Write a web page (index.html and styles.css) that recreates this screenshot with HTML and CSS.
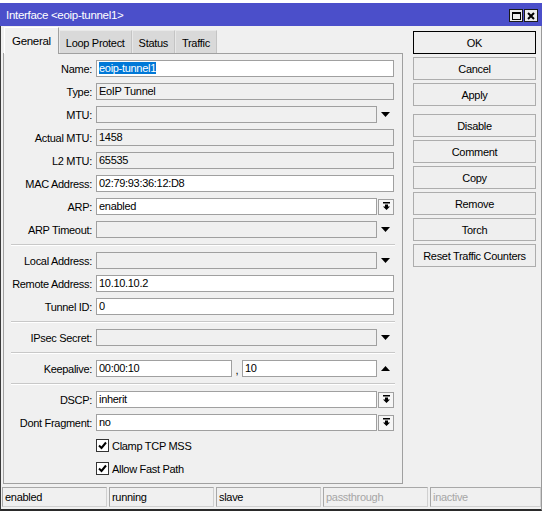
FILE: index.html
```html
<!DOCTYPE html>
<html>
<head>
<meta charset="utf-8">
<link rel="stylesheet" href="styles.css">
</head>
<body>
<div class="window">
  <div class="topstrip"></div>
  <div class="titlebar">
    <span class="title">Interface &lt;eoip-tunnel1&gt;</span>
    <div class="tbtns">
      <span class="tbtn"><svg width="9" height="8" viewBox="0 0 9 8"><rect x="0.5" y="0.5" width="8" height="7" fill="none" stroke="#000"/><rect x="0" y="0" width="9" height="2" fill="#000"/></svg></span>
      <span class="tbtn"><svg width="8" height="8" viewBox="0 0 8 8"><path d="M1 1L7 7M7 1L1 7" stroke="#000" stroke-width="2"/></svg></span>
    </div>
  </div>
  <div class="frame">
    <div class="main">
      <div class="left">
        <div class="tabs">
          <div class="tab active">General</div>
          <div class="tab">Loop Protect</div>
          <div class="tab">Status</div>
          <div class="tab">Traffic</div>
        </div>
        <div class="panel">
          <div class="row"><span class="lbl">Name:</span><div class="field"><span class="sel">eoip-tunnel1</span></div></div>
          <div class="row"><span class="lbl">Type:</span><div class="field ro">EoIP Tunnel</div></div>
          <div class="row dd"><span class="lbl">MTU:</span><div class="field ro"></div><span class="arrow"><svg width="9" height="5" viewBox="0 0 9 5"><path d="M0 0H9L4.5 5Z"/></svg></span></div>
          <div class="row"><span class="lbl">Actual MTU:</span><div class="field ro">1458</div></div>
          <div class="row"><span class="lbl">L2 MTU:</span><div class="field ro">65535</div></div>
          <div class="row"><span class="lbl">MAC Address:</span><div class="field">02:79:93:36:12:D8</div></div>
          <div class="row dd"><span class="lbl">ARP:</span><div class="field">enabled</div><span class="abtn"><svg width="9" height="9" viewBox="0 0 9 9"><rect x="1" y="0" width="7" height="1.5"/><path d="M3 2.5H6V4.5H8L4.5 8L1 4.5H3Z"/></svg></span></div>
          <div class="row dd"><span class="lbl">ARP Timeout:</span><div class="field ro"></div><span class="arrow"><svg width="9" height="5" viewBox="0 0 9 5"><path d="M0 0H9L4.5 5Z"/></svg></span></div>
          <div class="sep"></div>
          <div class="row dd"><span class="lbl">Local Address:</span><div class="field ro"></div><span class="arrow"><svg width="9" height="5" viewBox="0 0 9 5"><path d="M0 0H9L4.5 5Z"/></svg></span></div>
          <div class="row"><span class="lbl">Remote Address:</span><div class="field">10.10.10.2</div></div>
          <div class="row"><span class="lbl">Tunnel ID:</span><div class="field">0</div></div>
          <div class="sep"></div>
          <div class="row dd"><span class="lbl">IPsec Secret:</span><div class="field ro"></div><span class="arrow"><svg width="9" height="5" viewBox="0 0 9 5"><path d="M0 0H9L4.5 5Z"/></svg></span></div>
          <div class="sep"></div>
          <div class="row"><span class="lbl">Keepalive:</span><div class="field ka1">00:00:10</div><span class="comma">,</span><div class="field ka2">10</div><span class="arrow"><svg width="9" height="5" viewBox="0 0 9 5"><path d="M0 5H9L4.5 0Z"/></svg></span></div>
          <div class="sep"></div>
          <div class="row dd"><span class="lbl">DSCP:</span><div class="field">inherit</div><span class="abtn"><svg width="9" height="9" viewBox="0 0 9 9"><rect x="1" y="0" width="7" height="1.5"/><path d="M3 2.5H6V4.5H8L4.5 8L1 4.5H3Z"/></svg></span></div>
          <div class="row dd"><span class="lbl">Dont Fragment:</span><div class="field">no</div><span class="abtn"><svg width="9" height="9" viewBox="0 0 9 9"><rect x="1" y="0" width="7" height="1.5"/><path d="M3 2.5H6V4.5H8L4.5 8L1 4.5H3Z"/></svg></span></div>
          <div class="row chk"><span class="box"><svg width="9" height="9" viewBox="0 0 9 9"><path d="M1 4.5L3.5 7L8 1.5" fill="none" stroke="#000" stroke-width="2"/></svg></span><span>Clamp TCP MSS</span></div>
          <div class="row chk"><span class="box"><svg width="9" height="9" viewBox="0 0 9 9"><path d="M1 4.5L3.5 7L8 1.5" fill="none" stroke="#000" stroke-width="2"/></svg></span><span>Allow Fast Path</span></div>
        </div>
      </div>
      <div class="buttons">
        <div class="btn default">OK</div>
        <div class="btn">Cancel</div>
        <div class="btn">Apply</div>
        <div class="btn spaced">Disable</div>
        <div class="btn">Comment</div>
        <div class="btn">Copy</div>
        <div class="btn">Remove</div>
        <div class="btn">Torch</div>
        <div class="btn">Reset Traffic Counters</div>
      </div>
    </div>
    <div class="status">
      <div class="cell">enabled</div>
      <div class="cell">running</div>
      <div class="cell">slave</div>
      <div class="cell dim">passthrough</div>
      <div class="cell dim last">inactive</div>
    </div>
  </div>
</div>
</body>
</html>
```
FILE: styles.css
```css
* { box-sizing: border-box; }
body {
  margin: 0;
  background: #f0f0f0;
  font-family: "Liberation Sans", Arial, sans-serif;
  font-size: 11px;
  letter-spacing: -0.3px;
  color: #000;
}
.window {
  width: 542px;
  height: 511px;
  display: flex;
  flex-direction: column;
  background: #f0f0f0;
  overflow: hidden;
}
.topstrip { height: 3px; background: #ffffff; }
.titlebar {
  height: 23px;
  background: #4b4fca;
  color: #fff;
  display: flex;
  align-items: center;
  justify-content: space-between;
  padding: 0 4px 0 6px;
  font-size: 11.5px;
}
.tbtns { display: flex; gap: 1px; margin-top: 2px; }
.tbtn {
  width: 14px;
  height: 13px;
  border: 1px solid #1a1a1a;
  background: #ececec;
  display: flex;
  align-items: center;
  justify-content: center;
}
.frame {
  flex: 1;
  display: flex;
  flex-direction: column;
  border-left: 1px solid #3a3a3a;
  border-right: 1px solid #9a9a9a;
  border-bottom: 2px solid #2a2a2a;
}
.main { display: flex; padding-left: 2px; gap: 10px; }
.left { width: 400px; }
.tabs {
  display: flex;
  align-items: flex-end;
  height: 27px;
  padding-left: 1px;
}
.tab {
  height: 23px;
  padding: 1px 6px 0;
  display: flex;
  align-items: center;
  background: #d9d9d9;
  border: 1px solid #e8e8e8;
  border-bottom: none;
  border-right-color: #c4c4c4;
}
.tab.active {
  height: 27px;
  margin-bottom: -1px;
  padding: 0 7px 1px;
  background: #f0f0f0;
  border-color: #ffffff;
  border-right-color: #a0a0a0;
  position: relative;
  z-index: 1;
  font-size: 11.5px;
}
.panel {
  border: 1px solid #a0a0a0;
  padding: 6px 7px 6px 0;
  display: flex;
  flex-direction: column;
  gap: 6px;
}
.row { display: flex; align-items: center; height: 17px; }
.lbl {
  width: 88px;
  margin-right: 4px;
  text-align: right;
  white-space: nowrap;
}
.field {
  width: 298px;
  height: 17px;
  border: 1px solid #a0a0a0;
  background: #fff;
  padding: 0 2px;
  line-height: 15px;
  white-space: nowrap;
  overflow: hidden;
}
.field.ro { background: #f0f0f0; }
.row.dd .field { width: 281px; }
.field.ka1 { width: 136px; }
.comma { width: 10px; text-align: center; padding-top: 3px; }
.field.ka2 { width: 135px; }
.arrow {
  width: 17px;
  display: flex;
  justify-content: center;
  align-items: center;
}
.abtn {
  width: 16px;
  height: 16px;
  margin-left: 1px;
  border: 1px solid #a0a0a0;
  background: #f6f6f6;
  display: flex;
  justify-content: center;
  align-items: center;
}
.sel { background: #0078d7; color: #fff; }
.sep {
  height: 2px;
  margin-left: 7px;
  border-top: 1px solid #c8c8c8;
  border-bottom: 1px solid #ffffff;
}
.row.chk { padding-left: 92px; }
.box {
  width: 13px;
  height: 13px;
  border: 1px solid #333;
  background: #fff;
  margin-right: 3px;
  display: flex;
  align-items: center;
  justify-content: center;
}
.buttons {
  width: 123px;
  padding-top: 5px;
  display: flex;
  flex-direction: column;
  gap: 3px;
}
.btn {
  height: 23px;
  border: 1px solid #adadad;
  background: #efefef;
  display: flex;
  align-items: center;
  justify-content: center;
}
.btn.default { border-color: #000; }
.btn.spaced { margin-top: 5px; }
.status {
  display: flex;
  gap: 2px;
  padding-left: 1px;
  margin-top: 3px;
  height: 20px;
}
.cell {
  width: 105px;
  border: 1px solid #a8a8a8;
  border-right-color: #d0d0d0;
  border-bottom-color: #d0d0d0;
  padding: 2px 0 0 2px;
  line-height: 15px;
}
.cell.last { flex: 1; }
.cell.dim { color: #a6a6a6; }
```
